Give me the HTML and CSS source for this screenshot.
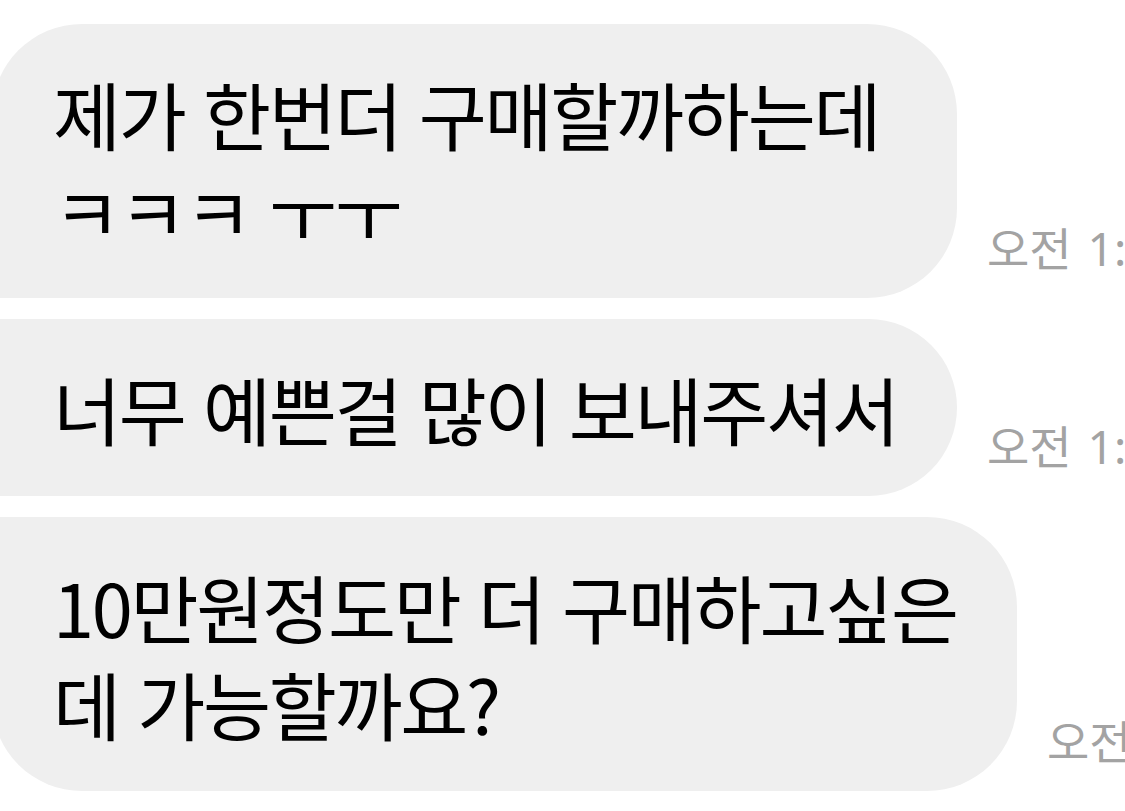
FILE: index.html
```html
<!DOCTYPE html>
<html lang="ko">
<head>
  <meta charset="UTF-8">
  <meta name="viewport" content="width=device-width, initial-scale=1.0">
  <title>채팅</title>
  <link rel="stylesheet" href="styles.css">
</head>
<body>
  <div class="chat">
    <div class="row">
      <div class="bubble bubble-first">제가 한번더 구매할까하는데<br>ㅋㅋㅋ ㅜㅜ</div>
      <span class="time">오전 1:23</span>
    </div>
    <div class="row">
      <div class="bubble">너무 예쁜걸 많이 보내주셔서</div>
      <span class="time">오전 1:23</span>
    </div>
    <div class="row">
      <div class="bubble bubble-last">10만원정도만 더 구매하고싶은<br>데 가능할까요?</div>
      <span class="time">오전 1:24</span>
    </div>
  </div>
</body>
</html>
```

FILE: styles.css
```css
body { margin: 0; background: #fff; overflow: hidden; font-family: "Noto Sans CJK KR", "Noto Sans", sans-serif; }
.chat { display: flex; flex-direction: column; gap: 21px; padding-top: 24px; margin-left: -8px; }
.row { display: flex; align-items: flex-end; gap: 30px; }
.bubble { box-sizing: border-box; width: 965px; flex-shrink: 0; padding: 40px 0 40px 61px; background: #efefef; color: #000; font-size: 74px; line-height: 97px; letter-spacing: -2.3px; white-space: nowrap; border-radius: 8px 90px 90px 8px; }
.bubble-first { border-top-left-radius: 90px; }
.bubble-last { width: 1025px; border-bottom-left-radius: 90px; }
.time { flex-shrink: 0; margin-bottom: 22px; color: #a3a3a3; font-family: "Noto Sans", "Noto Sans CJK KR", sans-serif; font-size: 46px; line-height: 55px; word-spacing: 4px; white-space: nowrap; }
```
